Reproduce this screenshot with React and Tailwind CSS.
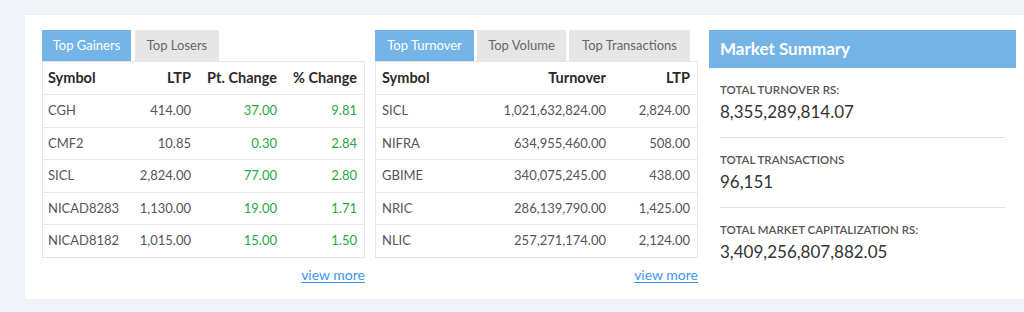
import React from 'react';

const gainers = [
  ['CGH', '414.00', '37.00', '9.81'],
  ['CMF2', '10.85', '0.30', '2.84'],
  ['SICL', '2,824.00', '77.00', '2.80'],
  ['NICAD8283', '1,130.00', '19.00', '1.71'],
  ['NICAD8182', '1,015.00', '15.00', '1.50'],
];

const turnover = [
  ['SICL', '1,021,632,824.00', '2,824.00'],
  ['NIFRA', '634,955,460.00', '508.00'],
  ['GBIME', '340,075,245.00', '438.00'],
  ['NRIC', '286,139,790.00', '1,425.00'],
  ['NLIC', '257,271,174.00', '2,124.00'],
];

const summary = [
  ['TOTAL TURNOVER RS:', '8,355,289,814.07'],
  ['TOTAL TRANSACTIONS', '96,151'],
  ['TOTAL MARKET CAPITALIZATION RS:', '3,409,256,807,882.05'],
];

const Tab = ({ label, active, width }) => (
  <div
    className={`h-[31px] flex items-center justify-center text-[13px] ${width} ${
      active ? 'bg-[#74b4e7] text-white' : 'bg-[#e6e6e6] text-[#666]'
    }`}
  >
    {label}
  </div>
);

const ViewMore = () => (
  <div className="flex justify-end pt-[6px]">
    <a href="#" className="text-[14px] text-[#3d97ee] underline underline-offset-2">view more</a>
  </div>
);

export default function App() {
  return (
    <div className="w-full h-[312px] overflow-hidden bg-[#f2f3f8] font-['Lato',sans-serif]">
      <div className="w-[1060px] ml-[25px] mt-[15px] h-[284px] bg-white shadow-[0_0_3px_rgba(0,0,0,0.03)] pl-[17px] pt-[15px] flex">
        {/* Top Gainers */}
        <div className="w-[323px]">
          <div className="flex gap-[4px]">
            <Tab label="Top Gainers" active width="w-[89px]" />
            <Tab label="Top Losers" width="w-[84px]" />
          </div>
          <div className="border border-[#e6e6e6]">
            <div className="grid grid-cols-[70px_86px_86px_1fr] h-[32px] items-center text-[14.5px] font-bold text-[#2a2a2a]">
              <div className="pl-[5px]">Symbol</div>
              <div className="text-right pr-2">LTP</div>
              <div className="text-right pr-2">Pt. Change</div>
              <div className="text-right pr-[7px]">% Change</div>
            </div>
            {gainers.map((r) => (
              <div key={r[0]} className="grid grid-cols-[70px_86px_86px_1fr] h-[32.5px] items-center border-t border-[#e8e8e8] text-[13px] text-[#555]">
                <div className="pl-[5px]">{r[0]}</div>
                <div className="text-right pr-2">{r[1]}</div>
                <div className="text-right pr-2 text-[#28a745]">{r[2]}</div>
                <div className="text-right pr-[7px] text-[#28a745]">{r[3]}</div>
              </div>
            ))}
          </div>
          <ViewMore />
        </div>

        {/* Top Turnover */}
        <div className="w-[323px] ml-[10px]">
          <div className="flex gap-[3px]">
            <Tab label="Top Turnover" active width="w-[99px]" />
            <Tab label="Top Volume" width="w-[89px]" />
            <Tab label="Top Transactions" width="w-[121px]" />
          </div>
          <div className="border border-[#e6e6e6]">
            <div className="grid grid-cols-[120px_118px_1fr] h-[32px] items-center text-[14.5px] font-bold text-[#2a2a2a]">
              <div className="pl-[6px]">Symbol</div>
              <div className="text-right pr-2">Turnover</div>
              <div className="text-right pr-[7px]">LTP</div>
            </div>
            {turnover.map((r) => (
              <div key={r[0]} className="grid grid-cols-[120px_118px_1fr] h-[32.5px] items-center border-t border-[#e8e8e8] text-[13px] text-[#555]">
                <div className="pl-[6px]">{r[0]}</div>
                <div className="text-right pr-2">{r[1]}</div>
                <div className="text-right pr-[7px]">{r[2]}</div>
              </div>
            ))}
          </div>
          <ViewMore />
        </div>

        {/* Market Summary */}
        <div className="w-[307px] ml-[11px]">
          <div className="h-[38px] bg-[#74b4e7] flex items-center pl-[11px] text-white text-[17px] font-bold">
            Market Summary
          </div>
          <div className="px-[11px]">
            {summary.map((s, i) => (
              <div key={s[0]} className={`pt-[14px] pb-[13px] ${i < 2 ? 'border-b border-[#e3e3e3]' : ''}`}>
                <div className="text-[11.5px] leading-[16px] font-semibold text-[#555]">{s[0]}</div>
                <div className="text-[17px] leading-[24px] mt-[2px] text-[#333]">{s[1]}</div>
              </div>
            ))}
          </div>
        </div>
      </div>
    </div>
  );
}
